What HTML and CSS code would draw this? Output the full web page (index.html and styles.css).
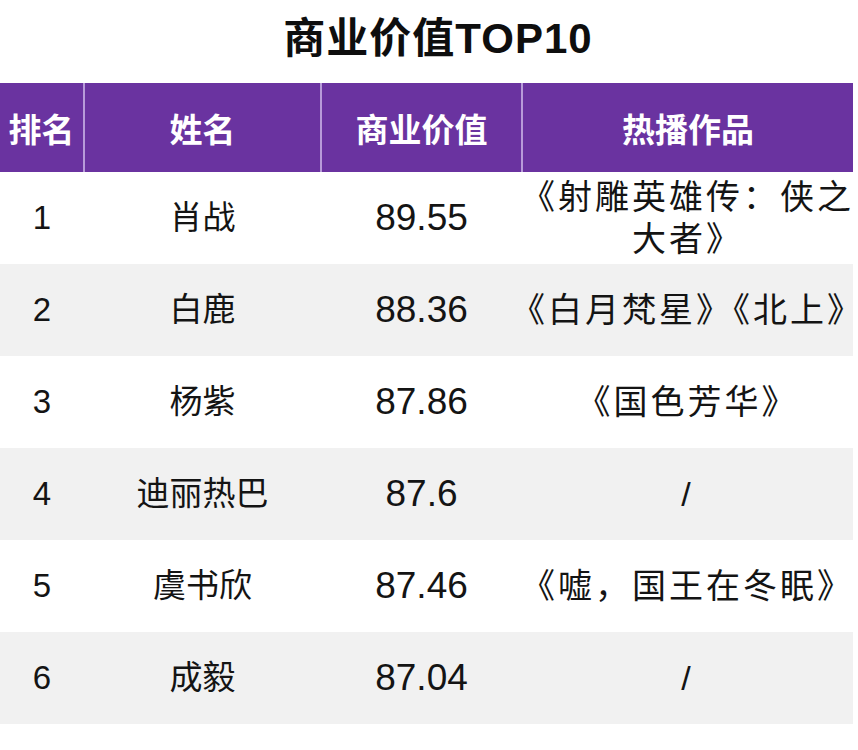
FILE: index.html
```html
<!DOCTYPE html>
<html lang="zh">
<head>
<meta charset="utf-8">
<title>商业价值TOP10</title>
<link rel="stylesheet" href="styles.css">
</head>
<body>
<div class="page">
  <h1 class="title">商业价值TOP10</h1>
  <table class="rank">
    <colgroup>
      <col class="c1"><col class="c2"><col class="c3"><col class="c4">
    </colgroup>
    <thead>
      <tr><th>排名</th><th>姓名</th><th>商业价值</th><th>热播作品</th></tr>
    </thead>
    <tbody>
      <tr><td>1</td><td>肖战</td><td class="num">89.55</td><td class="works"><span class="w">《射雕英雄传：侠之<br>大者》</span></td></tr>
      <tr><td>2</td><td>白鹿</td><td class="num">88.36</td><td class="works"><span class="w">《白月梵星》《北上》</span></td></tr>
      <tr><td>3</td><td>杨紫</td><td class="num">87.86</td><td class="works"><span class="w">《国色芳华》</span></td></tr>
      <tr><td>4</td><td>迪丽热巴</td><td class="num">87.6</td><td class="works"><span class="w">/</span></td></tr>
      <tr><td>5</td><td>虞书欣</td><td class="num">87.46</td><td class="works"><span class="w">《嘘，国王在冬眠》</span></td></tr>
      <tr><td>6</td><td>成毅</td><td class="num">87.04</td><td class="works"><span class="w">/</span></td></tr>
    </tbody>
  </table>
</div>
</body>
</html>
```
FILE: styles.css
```css
html, body {
  margin: 0;
  padding: 0;
  background: #ffffff;
}
body {
  font-family: "Liberation Sans", "Noto Sans CJK SC", sans-serif;
  color: #141414;
}
.page {
  width: 858px;
}
.title {
  margin: 0;
  height: 83px;
  padding-left: 18px;
  line-height: 78px;
  text-align: center;
  font-size: 42px;
  font-weight: bold;
  color: #0e0e0e;
  letter-spacing: 1px;
}
.rank {
  width: 853px;
  border-collapse: collapse;
  table-layout: fixed;
}
.c1 { width: 84px; }
.c2 { width: 237px; }
.c3 { width: 201px; }
.c4 { width: 331px; }
.rank th {
  height: 89px;
  padding: 0;
  background: #6a33a0;
  color: #ffffff;
  font-size: 33px;
  font-weight: bold;
  text-align: center;
  border-left: 2px solid #b89bd9;
}
.rank th:first-child {
  border-left: none;
}
.rank td {
  height: 92px;
  padding: 0;
  font-size: 33px;
  text-align: center;
  line-height: 42px;
  white-space: nowrap;
}
.rank td.num {
  font-size: 37px;
}
.rank tbody tr:nth-child(even) td {
  background: #f1f1f1;
}
.works {
  font-size: 34px;
}
.w {
  display: inline-block;
  margin: 0 -20px;
  font-size: 34px;
  letter-spacing: 3px;
  text-spacing-trim: trim-both;
}
```
